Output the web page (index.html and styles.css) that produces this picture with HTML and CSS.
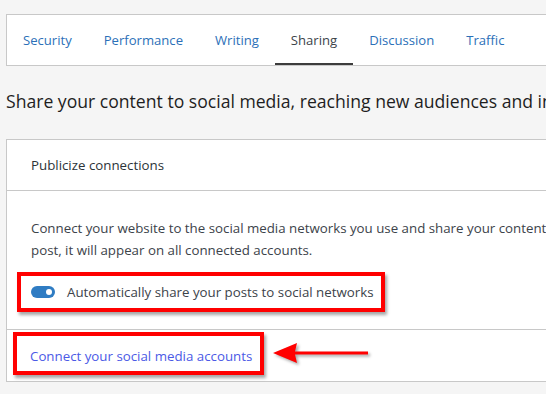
FILE: index.html
```html
<!DOCTYPE html>
<html lang="en">
<head>
<meta charset="utf-8">
<title>Sharing settings</title>
<link rel="stylesheet" href="styles.css">
</head>
<body>
<div class="page">
  <nav class="tabs">
    <a class="tab">Security</a>
    <a class="tab">Performance</a>
    <a class="tab">Writing</a>
    <a class="tab active">Sharing</a>
    <a class="tab">Discussion</a>
    <a class="tab">Traffic</a>
  </nav>
  <h1 class="title">Share your content to social media, reaching new audiences and increasing engagement.</h1>
  <section class="card">
    <header class="card-head">Publicize connections</header>
    <div class="card-body">
      <p class="desc">Connect your website to the social media networks you use and share your content across all your social accounts with a single click. When you publish a<br>post, it will appear on all connected accounts.</p>
      <div class="mark mark-toggle">
        <span class="toggle"><span class="knob"></span></span>
        <span class="toggle-label">Automatically share your posts to social networks</span>
      </div>
    </div>
    <footer class="card-foot">
      <div class="mark mark-link"><a class="link">Connect your social media accounts</a></div>
    </footer>
  </section>
  <svg class="arrow" width="104" height="28" viewBox="0 0 104 28">
    <path d="M3 10 L27 0 L25 8.5 L98 8.5 L98 11.5 L25 11.5 L27 20 Z" fill="#f00"/>
  </svg>
</div>
</body>
</html>
```
FILE: styles.css
```css
html, body {
  margin: 0;
  padding: 0;
  background: #f5f5f5;
  overflow: hidden;
}
body {
  font-family: "Open Sans", "Noto Sans", sans-serif;
  color: #3c434a;
  width: 546px;
  height: 394px;
}
.page {
  position: relative;
  padding: 14px 0 0 6px;
  white-space: nowrap;
}
.tabs {
  display: flex;
  width: 700px;
  height: 50px;
  background: #fff;
  border: 1px solid #c8c8c8;
}
.tab {
  display: flex;
  align-items: center;
  padding: 0 16px;
  font-size: 13.1px;
  color: #2c70b8;
  border-bottom: 2px solid transparent;
  padding-top: 2px;
}
.tab.active {
  color: #3c434a;
  border-bottom-color: #3c3c3c;
}
.title {
  margin: 23px 0 26px 0;
  font-size: 17.6px;
  line-height: 24px;
  font-weight: 400;
  color: #1e1e1e;
}
.card {
  width: 700px;
  background: #fff;
  border: 1px solid #c8c8c8;
}
.card-head {
  height: 50px;
  display: flex;
  align-items: center;
  padding-left: 24px;
  font-size: 13.3px;
  color: #2c3338;
  border-bottom: 1px solid #c8c8c8;
}
.card-body {
  padding: 26px 0 17px 0;
  border-bottom: 1px solid #c8c8c8;
}
.desc {
  margin: 0 0 11px 0;
  padding-left: 24px;
  font-size: 13.3px;
  line-height: 22px;
  color: #3c434a;
}
.mark {
  display: flex;
  align-items: center;
  border: 4px solid #f00;
  box-shadow: 2px 3px 3px rgba(0, 0, 0, 0.35);
  box-sizing: border-box;
}
.mark-toggle {
  width: 368px;
  height: 40px;
  margin-left: 10px;
  padding-left: 10px;
  gap: 12px;
}
.toggle {
  position: relative;
  display: inline-block;
  width: 24px;
  height: 12px;
  border-radius: 6px;
  background: #2f7cc3;
}
.knob {
  position: absolute;
  top: 3px;
  right: 3px;
  width: 6px;
  height: 6px;
  border-radius: 50%;
  background: #fff;
}
.toggle-label {
  font-size: 13.3px;
  color: #3c434a;
}
.card-foot {
  padding: 2px 0 6px 6px;
}
.mark-link {
  width: 251px;
  height: 43px;
  padding-left: 13px;
}
.link {
  font-size: 13.3px;
  color: #4b5ae6;
  padding-top: 4px;
}
.arrow {
  position: absolute;
  left: 270px;
  top: 343px;
  filter: drop-shadow(2px 2px 1.5px rgba(0, 0, 0, 0.35));
}
```
